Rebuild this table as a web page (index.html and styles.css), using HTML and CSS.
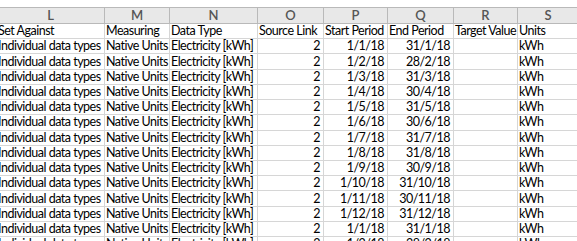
FILE: index.html
```html
<!DOCTYPE html>
<html>
<head>
<meta charset="utf-8">
<link rel="stylesheet" href="styles.css">
</head>
<body>
<div class="sheet">
<table class="grid">
<colgroup>
<col class="c-l"><col class="c-m"><col class="c-n"><col class="c-o"><col class="c-p"><col class="c-q"><col class="c-r"><col class="c-s">
</colgroup>
<thead>
<tr class="colhead"><th>L</th><th>M</th><th>N</th><th>O</th><th>P</th><th>Q</th><th>R</th><th>S</th></tr>
</thead>
<tbody>
<tr><td>Set Against</td><td>Measuring</td><td>Data Type</td><td>Source Link</td><td>Start Period</td><td>End Period</td><td>Target Value</td><td>Units</td></tr>
<tr><td>Individual data types</td><td>Native Units</td><td>Electricity [kWh]</td><td class="num">2</td><td class="num">1/1/18</td><td class="num">31/1/18</td><td></td><td>kWh</td></tr>
<tr><td>Individual data types</td><td>Native Units</td><td>Electricity [kWh]</td><td class="num">2</td><td class="num">1/2/18</td><td class="num">28/2/18</td><td></td><td>kWh</td></tr>
<tr><td>Individual data types</td><td>Native Units</td><td>Electricity [kWh]</td><td class="num">2</td><td class="num">1/3/18</td><td class="num">31/3/18</td><td></td><td>kWh</td></tr>
<tr><td>Individual data types</td><td>Native Units</td><td>Electricity [kWh]</td><td class="num">2</td><td class="num">1/4/18</td><td class="num">30/4/18</td><td></td><td>kWh</td></tr>
<tr><td>Individual data types</td><td>Native Units</td><td>Electricity [kWh]</td><td class="num">2</td><td class="num">1/5/18</td><td class="num">31/5/18</td><td></td><td>kWh</td></tr>
<tr><td>Individual data types</td><td>Native Units</td><td>Electricity [kWh]</td><td class="num">2</td><td class="num">1/6/18</td><td class="num">30/6/18</td><td></td><td>kWh</td></tr>
<tr><td>Individual data types</td><td>Native Units</td><td>Electricity [kWh]</td><td class="num">2</td><td class="num">1/7/18</td><td class="num">31/7/18</td><td></td><td>kWh</td></tr>
<tr><td>Individual data types</td><td>Native Units</td><td>Electricity [kWh]</td><td class="num">2</td><td class="num">1/8/18</td><td class="num">31/8/18</td><td></td><td>kWh</td></tr>
<tr><td>Individual data types</td><td>Native Units</td><td>Electricity [kWh]</td><td class="num">2</td><td class="num">1/9/18</td><td class="num">30/9/18</td><td></td><td>kWh</td></tr>
<tr><td>Individual data types</td><td>Native Units</td><td>Electricity [kWh]</td><td class="num">2</td><td class="num">1/10/18</td><td class="num">31/10/18</td><td></td><td>kWh</td></tr>
<tr><td>Individual data types</td><td>Native Units</td><td>Electricity [kWh]</td><td class="num">2</td><td class="num">1/11/18</td><td class="num">30/11/18</td><td></td><td>kWh</td></tr>
<tr><td>Individual data types</td><td>Native Units</td><td>Electricity [kWh]</td><td class="num">2</td><td class="num">1/12/18</td><td class="num">31/12/18</td><td></td><td>kWh</td></tr>
<tr><td>Individual data types</td><td>Native Units</td><td>Electricity [kWh]</td><td class="num">2</td><td class="num">1/1/18</td><td class="num">31/1/18</td><td></td><td>kWh</td></tr>
<tr><td>Individual data types</td><td>Native Units</td><td>Electricity [kWh]</td><td class="num">2</td><td class="num">1/2/18</td><td class="num">28/2/18</td><td></td><td>kWh</td></tr>
</tbody>
</table>
</div>
</body>
</html>
```

FILE: styles.css
```css
html, body {
  margin: 0;
  padding: 0;
  background: #ffffff;
  overflow: hidden;
  width: 577px;
  height: 241px;
}

.sheet {
  padding-top: 7px;
  margin-left: -4px;
}

.grid {
  border-collapse: collapse;
  table-layout: fixed;
  width: 582px;
  font-family: Lato, "Liberation Sans", sans-serif;
  font-size: 12.5px;
  letter-spacing: -0.5px;
  color: #000;
}

.c-l { width: 108px; }
.c-m { width: 65px; }
.c-n { width: 88px; }
.c-o { width: 66px; }
.c-p { width: 64px; }
.c-q { width: 66px; }
.c-r { width: 64px; }
.c-s { width: 61px; }

.colhead th {
  height: 15px;
  padding: 0;
  background: #e8e8e8;
  border: 1px solid #b9b9b9;
  color: #555;
  font-weight: 600;
  font-size: 13px;
  letter-spacing: 0;
  line-height: 15px;
  text-align: center;
}

.grid td {
  height: 14.23px;
  padding: 0 3px 0 1px;
  border: 1px solid #d6d6d6;
  line-height: 14px;
  white-space: nowrap;
  overflow: hidden;
  text-overflow: clip;
  text-align: left;
}

.grid td.num {
  text-align: right;
}
```
